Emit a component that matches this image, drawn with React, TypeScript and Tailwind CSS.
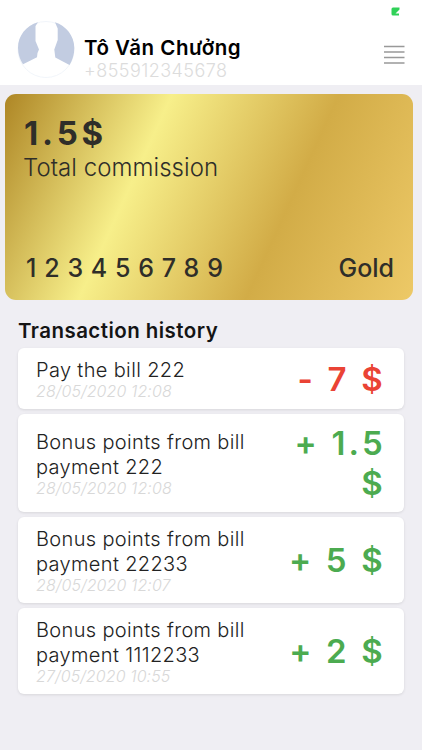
import React from 'react'

interface Transaction {
  id: number
  title: string
  date: string
  amount: string
  type: 'in' | 'out'
  className: string
}

const transactions: Transaction[] = [
  { id: 1, title: 'Pay the bill 222', date: '28/05/2020 12:08', amount: '- 7 $', type: 'out', className: 'h-[61px]' },
  { id: 2, title: 'Bonus points from bill payment 222', date: '28/05/2020 12:08', amount: '+ 1.5 $', type: 'in', className: 'h-[98px]' },
  { id: 3, title: 'Bonus points from bill payment 22233', date: '28/05/2020 12:07', amount: '+ 5 $', type: 'in', className: 'h-[86px]' },
  { id: 4, title: 'Bonus points from bill payment 1112233', date: '27/05/2020 10:55', amount: '+ 2 $', type: 'in', className: 'h-[86px]' },
]

const Avatar: React.FC = () => (
  <svg width="58" height="58" viewBox="0 0 58 58" className="shrink-0">
    <circle cx="29" cy="29.5" r="28" fill="none" stroke="#eef2f9" strokeWidth="0.8" />
    <path d="M21 2.3C9 5.5 1 16 1 28C1 34.500 3 39.500 6 44.300L20 37.200L20.500 33L22 29.500L18.500 21V6L21 2.300Z" fill="#c2cce1" />
    <path d="M38 2.300C49 5.500 57.300 16 57.300 28C57.300 34.500 55.500 40 52.500 45L38.300 37.500L37.300 29.500L40.700 20V8.500L38 2.300Z" fill="#c2cce1" />
  </svg>
)

const Header: React.FC = () => (
  <header className="relative h-[85px] bg-white flex items-start pl-[17px] pr-4 pt-5">
    <Avatar />
    <div className="ml-[9px] mt-4">
      <h1 className="text-[20.5px] leading-6 font-semibold tracking-[0.5px] text-black whitespace-nowrap">Tô Văn Chưởng</h1>
      <p className="text-[18px] leading-[22px] font-light tracking-[0.45px] text-[#dcdcdc] whitespace-nowrap">+855912345678</p>
    </div>
    <button aria-label="Menu" className="ml-auto mt-[25px]">
      <svg width="22" height="20" viewBox="0 0 22 20" className="block">
        <path d="M0 1.500H20.500M0 7H20.500M0 12.500H20.500M0 18H20.500" stroke="#999999" strokeWidth="1.500" />
      </svg>
    </button>
    {/* Recording indicator */}
    <svg width="9" height="9" viewBox="0 0 9 9" className="absolute top-[7px] right-[22px]">
      <path d="M2 0.500H8.500V2.500L4.500 6.500H8V8.500H2Q0.500 8.500 0.500 7V2Q0.500 0.500 2 0.500Z" fill="#30d158" />
    </svg>
  </header>
)

const CommissionCard: React.FC = () => (
  <section className="ml-[5px] mr-[9px] mt-[9px] h-[206px] rounded-[11px] px-[19px] pt-[19px] pb-4 flex flex-col text-[#2f2e29] bg-[linear-gradient(114.5deg,#ae8625_0%,#f7ef8a_33.3%,#d2ac47_66.6%,#edc967_100%)]">
    <p className="text-[33px] leading-10 font-bold tracking-[3.8px]">1.5$</p>
    <p className="-ml-px text-[24px] leading-[30px] font-light tracking-[0.05px]">Total commission</p>
    <div className="mt-auto flex items-center justify-between leading-8 font-medium text-[25px]">
      <span className="ml-[2px] tracking-[7.8px]">123456789</span>
      <span>Gold</span>
    </div>
  </section>
)

const TransactionCard: React.FC<{ item: Transaction }> = ({ item }) => (
  <li className={`${item.className} bg-white rounded-md shadow-[0_1px_3px_rgba(0,0,0,0.1)] px-[18px] flex items-center justify-between`}>
    <div className="w-[230px]">
      <p className="text-[20px] leading-[25px] font-light tracking-[0.35px] text-[#222222]">{item.title}</p>
      <p className="text-[16px] leading-[17px] font-light italic tracking-[0.1px] text-[#d8d8d8]">{item.date}</p>
    </div>
    <p className={`w-[112px] text-right text-[33px] leading-10 font-semibold tracking-[3.2px] ${item.type === 'in' ? 'text-[#4cab50]' : 'text-[#ea4335]'}`}>
      {item.amount}
    </p>
  </li>
)

export default function App() {
  return (
    <div className="min-h-screen bg-[#efeef3] font-['Inter',sans-serif]">
      <Header />
      <CommissionCard />
      <main className="px-[18px] pt-[18px]">
        <h2 className="text-[20.5px] leading-[26px] font-semibold tracking-[0.45px] text-[#141414]">Transaction history</h2>
        <ul className="mt-[4px] flex flex-col gap-[5px]">
          {transactions.map((item) => (
            <TransactionCard key={item.id} item={item} />
          ))}
        </ul>
      </main>
    </div>
  )
}
